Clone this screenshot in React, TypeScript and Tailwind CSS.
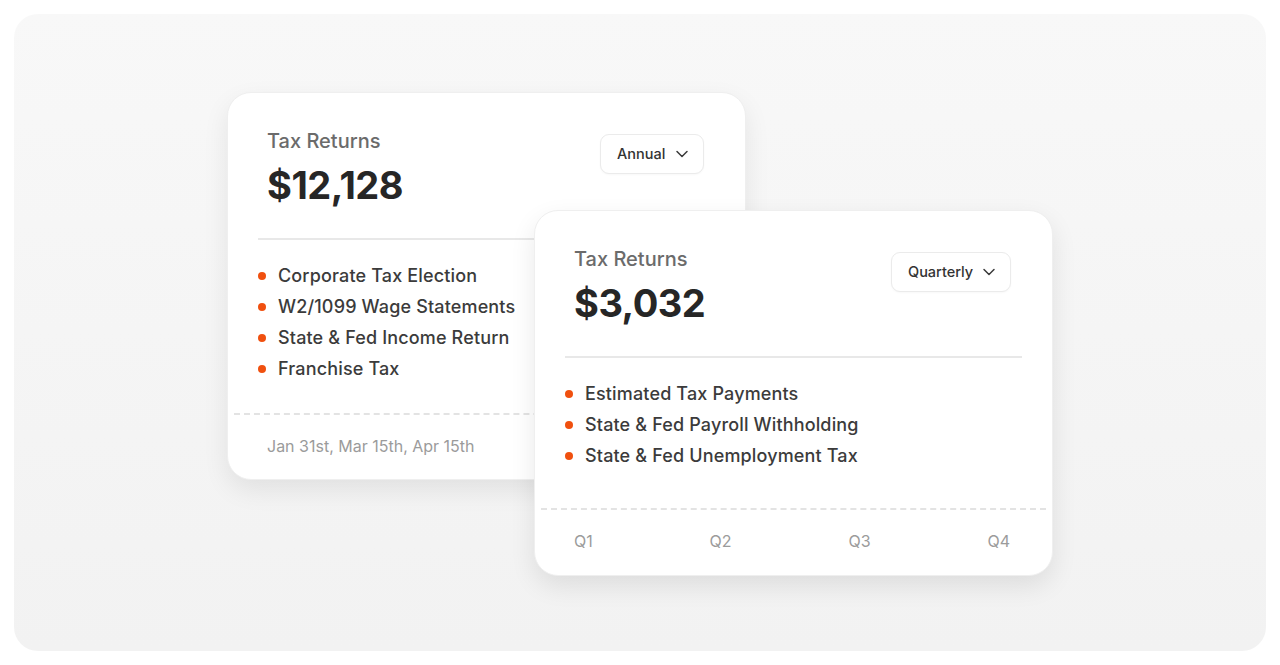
import React from "react";

function Chevron() {
  return (
    <svg width="14" height="14" viewBox="0 0 14 14" fill="none" className="shrink-0">
      <path d="M2 4.5 L7 9.5 L12 4.5" stroke="#3a3a3a" strokeWidth="1.5" strokeLinecap="round" strokeLinejoin="round" />
    </svg>
  );
}

function Dropdown({ label, w }: { label: string; w: string }) {
  return (
    <div className={`${w} h-[40px] rounded-[9px] border border-[#ebebeb] bg-white flex items-center justify-between pl-[16px] pr-[14px] shadow-[0_1px_2px_rgba(0,0,0,0.03)]`}>
      <span className="text-[14.5px] font-medium text-[#333333]">{label}</span>
      <Chevron />
    </div>
  );
}

function Bullet({ text }: { text: string }) {
  return (
    <li className="flex items-center h-[31px]">
      <span className="w-[8px] h-[8px] rounded-full bg-[#f0500f] ml-[1px] mr-[12px] shrink-0" />
      <span className="text-[18px] font-medium text-[#3b3b3b] tracking-[0.15px]">{text}</span>
    </li>
  );
}

function Header({ amount, label, w }: { amount: string; label: string; w: string }) {
  return (
    <div className="flex justify-between pl-[39px] pr-[41px] pt-[41px]">
      <div className="-mt-[5px]">
        <div className="text-[20px] leading-[24px] font-medium text-[#6b6b6b]">Tax Returns</div>
        <div className="text-[38px] leading-[44px] font-bold text-[#262626] mt-[10px] tracking-[-0.5px]">{amount}</div>
      </div>
      <Dropdown label={label} w={w} />
    </div>
  );
}

export default function App() {
  return (
    <div className="w-[1280px] h-[665px] bg-white p-[14px] font-['Inter',sans-serif]">
      <div className="w-[1252px] h-[637px] rounded-[24px] bg-gradient-to-b from-[#f8f8f8] to-[#f2f2f2] pl-[213px] pt-[78px] flex items-start">
        {/* Card 1 */}
        <div className="w-[519px] h-[388px] shrink-0 rounded-[24px] bg-white border border-[#efefef] shadow-[0_10px_26px_rgba(0,0,0,0.08)] flex flex-col">
          <Header amount="$12,128" label="Annual" w="w-[104px]" />
          <div className="mx-[30px] mt-[31px] h-[2px] bg-[#e8e8e8]" />
          <ul className="pl-[29px] pt-[20px]">
            <Bullet text="Corporate Tax Election" />
            <Bullet text="W2/1099 Wage Statements" />
            <Bullet text="State & Fed Income Return" />
            <Bullet text="Franchise Tax" />
          </ul>
          <div className="mx-[6px] mt-[29px] border-t-2 border-dashed border-[#e3e3e3]" />
          <div className="pl-[39px] pt-[19px] text-[16px] leading-[24px] text-[#9b9b9b]">Jan 31st, Mar 15th, Apr 15th</div>
        </div>
        {/* Card 2 */}
        <div className="w-[519px] h-[366px] shrink-0 -ml-[212px] mt-[118px] rounded-[24px] bg-white border border-[#efefef] shadow-[0_10px_26px_rgba(0,0,0,0.09)] flex flex-col">
          <Header amount="$3,032" label="Quarterly" w="w-[120px]" />
          <div className="mx-[30px] mt-[31px] h-[2px] bg-[#e8e8e8]" />
          <ul className="pl-[29px] pt-[20px]">
            <Bullet text="Estimated Tax Payments" />
            <Bullet text="State & Fed Payroll Withholding" />
            <Bullet text="State & Fed Unemployment Tax" />
          </ul>
          <div className="mx-[6px] mt-[37px] border-t-2 border-dashed border-[#e3e3e3]" />
          <div className="flex justify-between pl-[39px] pr-[42px] pt-[19px] text-[16px] leading-[24px] text-[#9b9b9b]">
            <span>Q1</span>
            <span>Q2</span>
            <span>Q3</span>
            <span>Q4</span>
          </div>
        </div>
      </div>
    </div>
  );
}
